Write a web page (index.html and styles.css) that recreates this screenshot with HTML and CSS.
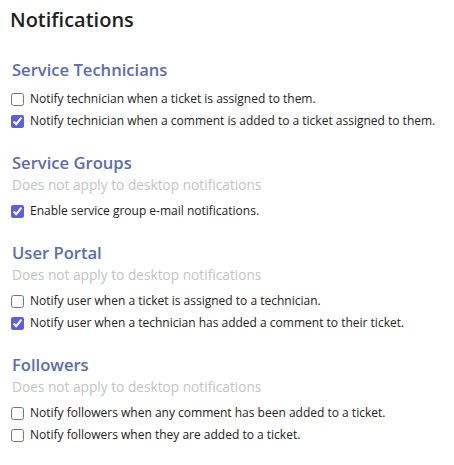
FILE: index.html
```html
<!DOCTYPE html>
<html>
<head>
<meta charset="utf-8">
<link rel="stylesheet" href="styles.css">
</head>
<body>
<div class="page">
  <h1 class="title">Notifications</h1>

  <section class="group first">
    <h2 class="group-title">Service Technicians</h2>
    <label class="opt"><input type="checkbox"><span>Notify technician when a ticket is assigned to them.</span></label>
    <label class="opt"><input type="checkbox" checked><span>Notify technician when a comment is added to a ticket assigned to them.</span></label>
  </section>

  <section class="group">
    <h2 class="group-title">Service Groups</h2>
    <p class="note">Does not apply to desktop notifications</p>
    <label class="opt"><input type="checkbox" checked><span>Enable service group e-mail notifications.</span></label>
  </section>

  <section class="group">
    <h2 class="group-title">User Portal</h2>
    <p class="note">Does not apply to desktop notifications</p>
    <label class="opt"><input type="checkbox"><span>Notify user when a ticket is assigned to a technician.</span></label>
    <label class="opt"><input type="checkbox" checked><span>Notify user when a technician has added a comment to their ticket.</span></label>
  </section>

  <section class="group">
    <h2 class="group-title">Followers</h2>
    <p class="note">Does not apply to desktop notifications</p>
    <label class="opt"><input type="checkbox"><span>Notify followers when any comment has been added to a ticket.</span></label>
    <label class="opt"><input type="checkbox"><span>Notify followers when they are added to a ticket.</span></label>
  </section>
</div>
</body>
</html>
```

FILE: styles.css
```css
html, body {
  margin: 0;
  padding: 0;
  background: #ffffff;
}
body {
  font-family: "Open Sans", "Noto Sans", sans-serif;
  color: #222;
}
.page {
  padding: 7px 10px 10px 10px;
}
.title {
  margin: 0;
  font-size: 20px;
  font-weight: 600;
  color: #1f1f1f;
  line-height: 26px;
}
.group {
  margin-top: 22px;
}
.group.first {
  margin-top: 25px;
}
.group-title {
  margin: 0 0 0 2px;
  font-size: 16.6px;
  font-weight: 600;
  color: #5b6cb2;
  line-height: 24px;
}
.note {
  margin: 0 0 0 2px;
  font-size: 13.7px;
  color: #c4c4c4;
  line-height: 20px;
}
.opt {
  display: flex;
  align-items: center;
  font-size: 12px;
  line-height: 16px;
  color: #222;
  margin-top: 6px;
}
.group-title + .opt {
  margin-top: 9px;
}
.note + .opt {
  margin-top: 8px;
}
.opt input {
  margin: 0 6px 0 1px;
  width: 13px;
  height: 13px;
  accent-color: #5b5fe0;
}
```
